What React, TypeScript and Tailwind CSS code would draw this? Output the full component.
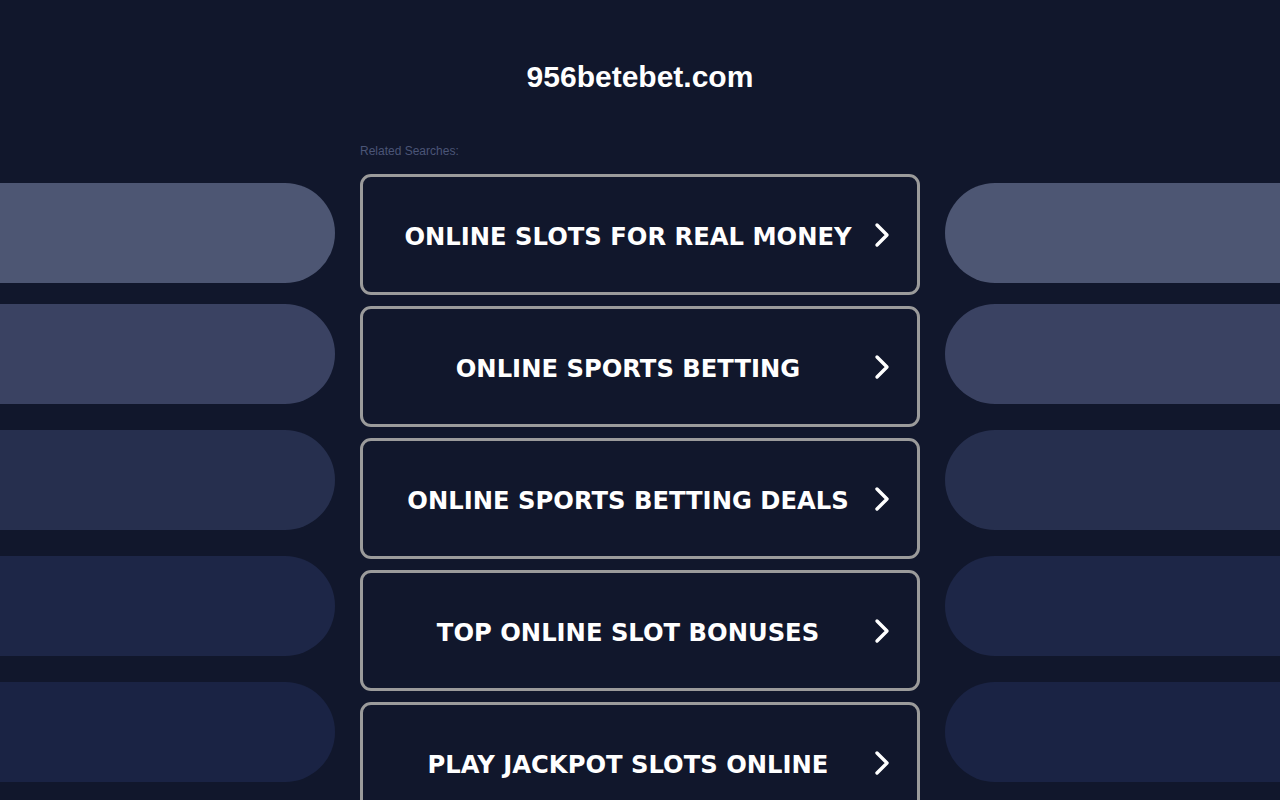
import React from "react";

const items = [
  "ONLINE SLOTS FOR REAL MONEY",
  "ONLINE SPORTS BETTING",
  "ONLINE SPORTS BETTING DEALS",
  "TOP ONLINE SLOT BONUSES",
  "PLAY JACKPOT SLOTS ONLINE",
];

function Chevron() {
  return (
    <svg width="18" height="26" viewBox="0 0 18 26" className="absolute right-[26px] top-1/2 -translate-y-1/2">
      <path d="M4 3 L14 13 L4 23" fill="none" stroke="#ffffff" strokeWidth="3.4" strokeLinecap="round" strokeLinejoin="round" />
    </svg>
  );
}

function SidePills({ side }: { side: "left" | "right" }) {
  const round = side === "left" ? "rounded-r-[50px]" : "rounded-l-[50px]";
  return (
    <div className="flex flex-col pt-[8px]">
      <div className={`h-[100px] bg-[#4d5673] ${round}`} />
      <div className={`mt-[21px] h-[100px] bg-[#3a4262] ${round}`} />
      <div className={`mt-[26px] h-[100px] bg-[#262f4e] ${round}`} />
      <div className={`mt-[26px] h-[100px] bg-[#1d2647] bg-[radial-gradient(#222c52_0.7px,transparent_0.7px)] bg-[length:4px_4px] ${round}`} />
      <div className={`mt-[26px] h-[100px] bg-[#1a2344] bg-[radial-gradient(#202a50_0.7px,transparent_0.7px)] bg-[length:4px_4px] ${round}`} />
    </div>
  );
}

export default function App() {
  return (
    <div className="w-[1280px] h-[800px] overflow-hidden bg-[#11172c] font-['Liberation_Sans',Arial,sans-serif]">
      <div className="h-[140px] flex items-start justify-center pt-[59px]">
        <h1 className="text-[30px] leading-[36px] font-bold text-white">956betebet.com</h1>
      </div>
      <div className="flex">
        <div className="w-[335px] shrink-0">
          <div className="h-[35px]" />
          <SidePills side="left" />
        </div>
        <div className="w-[560px] shrink-0 mx-[25px]">
          <div className="h-[34px] text-[12px] leading-[22px] text-[#4b5577]">Related Searches:</div>
          <div className="flex flex-col gap-[11px]">
            {items.map((t) => (
              <div
                key={t}
                className="relative h-[121px] rounded-[11px] border-[3px] border-[#9b9b9b] flex items-center justify-center pl-[20px] pr-[44px]"
              >
                <span className="pt-[5px] font-['DejaVu_Sans',Verdana,sans-serif] font-bold text-[24.25px] text-white whitespace-nowrap">
                  {t}
                </span>
                <Chevron />
              </div>
            ))}
          </div>
        </div>
        <div className="flex-1">
          <div className="h-[35px]" />
          <SidePills side="right" />
        </div>
      </div>
    </div>
  );
}
